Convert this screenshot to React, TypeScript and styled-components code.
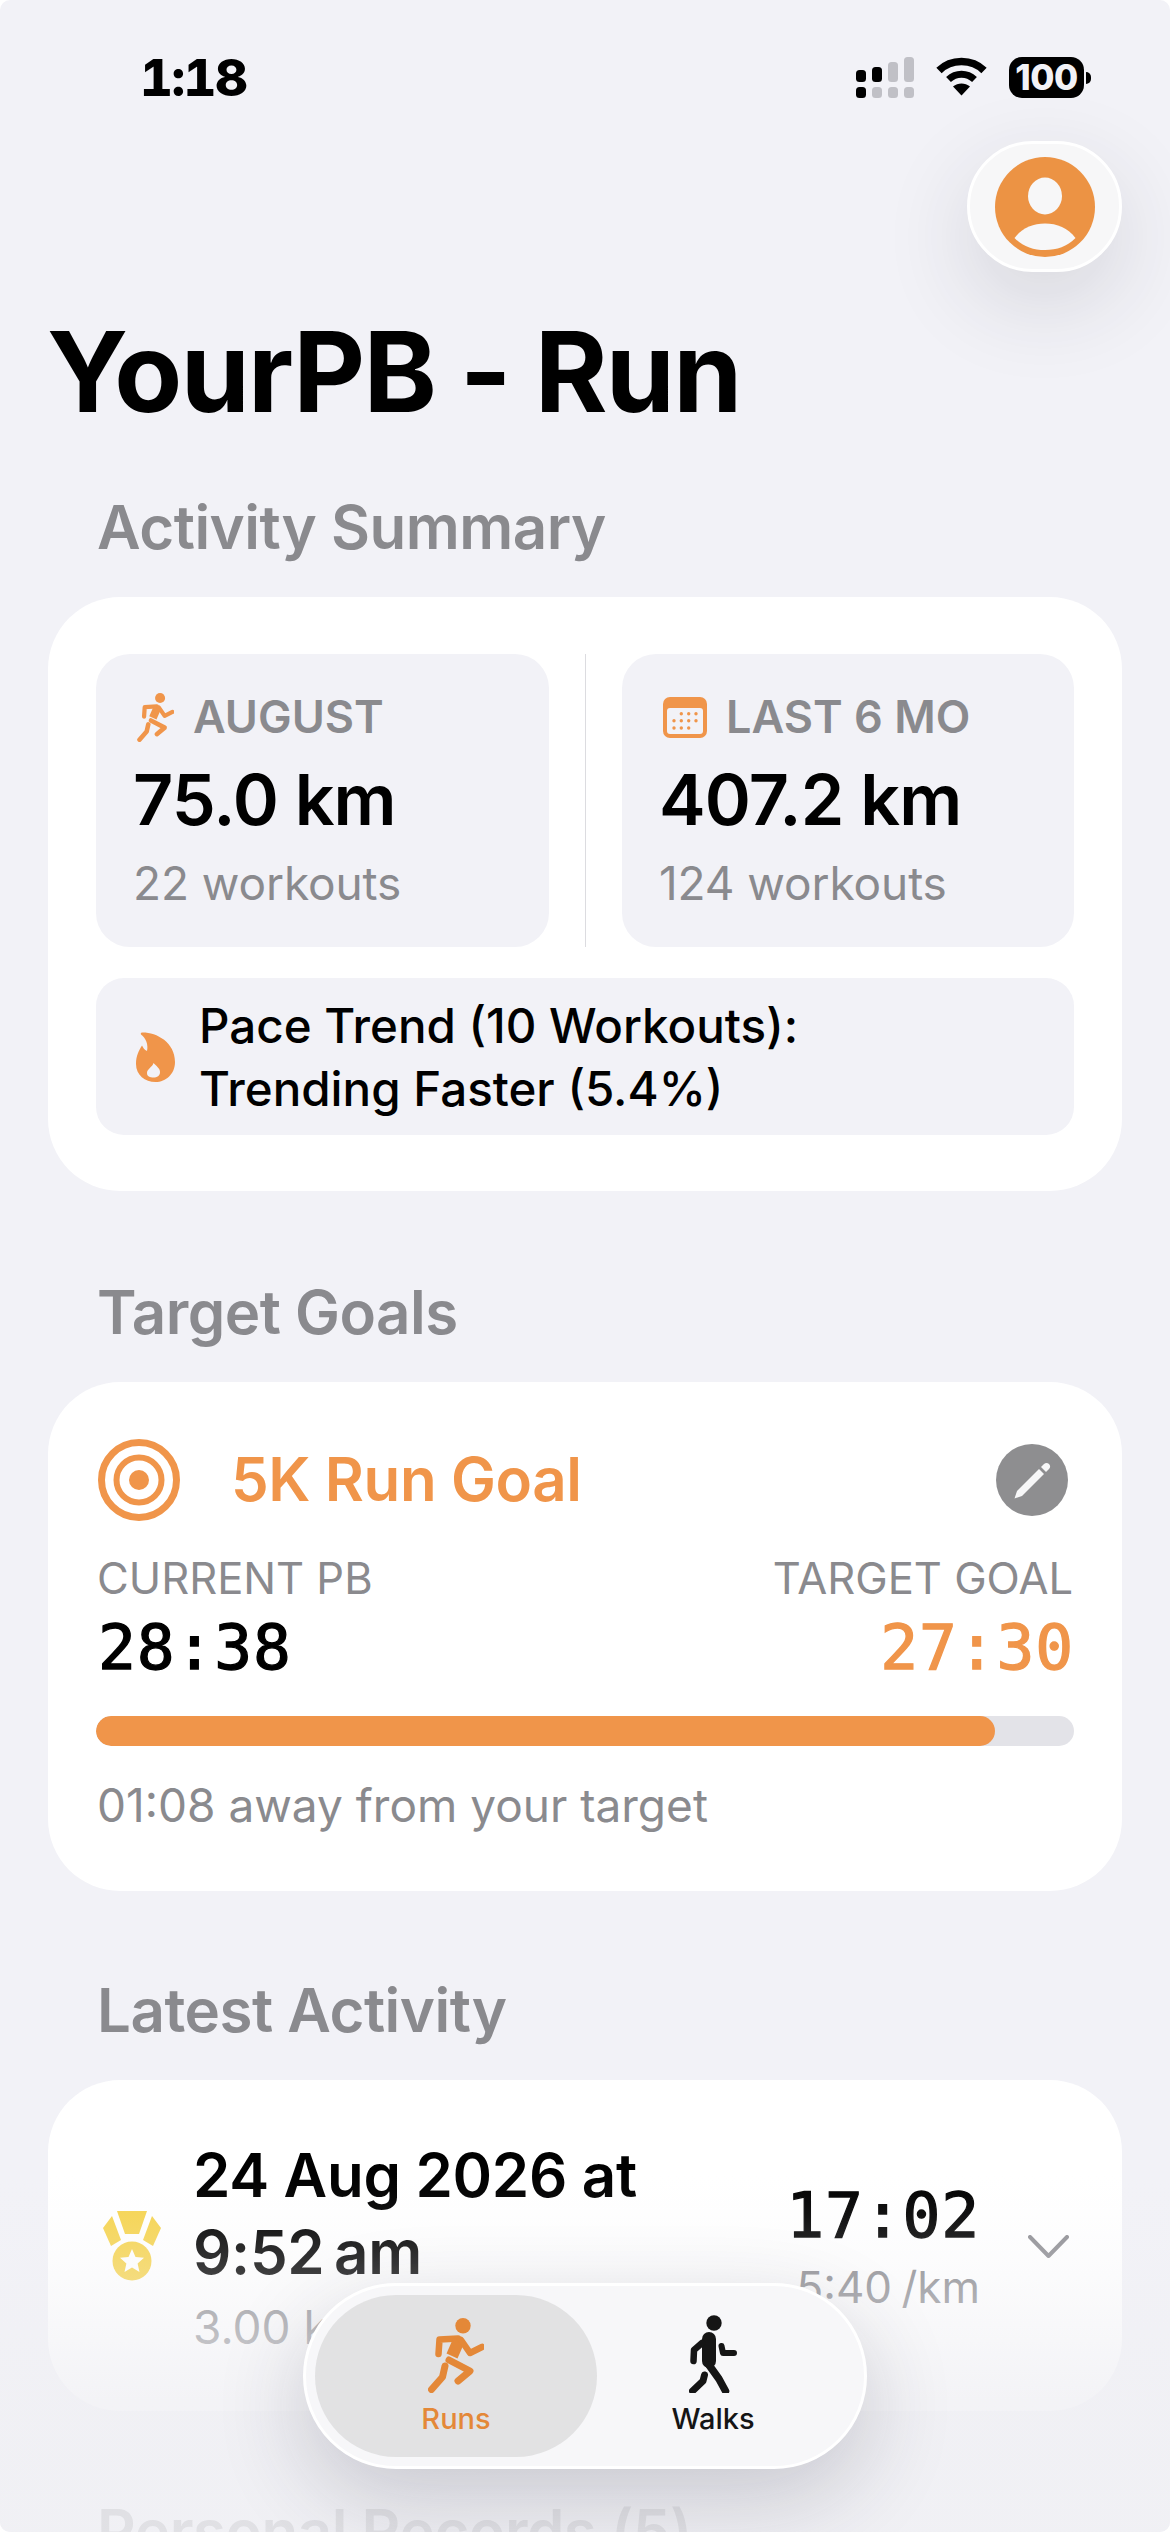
import React from "react";
import styled, { createGlobalStyle } from "styled-components";

const GlobalStyle = createGlobalStyle`
  html, body { margin: 0; padding: 0; background: #fff; }
  * { box-sizing: border-box; }
`;

const ORANGE = "#f0954a";
const GRAY = "#8a8a8e";

const Page = styled.div`
  position: relative;
  width: 1170px;
  height: 2532px;
  overflow: hidden;
  border-radius: 10px;
  background: #f2f2f7;
  font-family: Inter, "Liberation Sans", sans-serif;
  padding: 0 48px;
`;

const StatusBar = styled.div`
  height: 141px;
  margin: 0 -48px;
  padding: 57px 86px 0 140px;
  display: flex;
  align-items: flex-start;
  justify-content: space-between;
`;
const Clock = styled.div`
  font-size: 51px;
  line-height: 41px;
  font-weight: 800;
  color: #000;
  font-variant-numeric: tabular-nums;
  letter-spacing: -1.5px;
`;
const StatusIcons = styled.div`
  display: flex;
  align-items: flex-start;
  gap: 22px;
`;
const Battery = styled.div`
  position: relative;
  width: 75px;
  height: 41px;
  border-radius: 13px;
  background: #000;
  color: #f2f2f7;
  font-size: 35px;
  font-weight: 800;
  line-height: 41px;
  text-align: center;
  letter-spacing: -0.5px;
  &::after {
    content: "";
    position: absolute;
    left: 77px;
    top: 15px;
    width: 5px;
    height: 12px;
    border-radius: 0 6px 6px 0;
    background: #000;
  }
`;

const ProfileRow = styled.div`
  display: flex;
  justify-content: flex-end;
`;
const ProfileButton = styled.div`
  width: 155px;
  height: 131px;
  border-radius: 66px;
  background: #f7f7f8;
  border: 3px solid #fff;
  display: flex;
  align-items: center;
  justify-content: center;
  box-shadow: 0 30px 90px rgba(40, 40, 60, 0.14);
`;

const Title = styled.h1`
  margin: 40px 0 0 -1px;
  font-size: 111px;
  line-height: 120px;
  font-weight: 700;
  color: #000;
  letter-spacing: -1.7px;
`;

const SectionHeading = styled.h2<{ $top: number }>`
  margin: ${(p) => p.$top}px 0 35px 49px;
  font-size: 60px;
  line-height: 70px;
  font-weight: 600;
  color: ${GRAY};
  letter-spacing: -0.5px;
`;

const Card = styled.section`
  background: #fff;
  border-radius: 72px;
  padding: 57px 48px 56px;
`;

const StatGrid = styled.div`
  display: grid;
  grid-template-columns: 453px 1px 452px;
  gap: 36px;
`;
const Divider = styled.div`
  background: #dcdce0;
`;
const StatTile = styled.div`
  height: 293px;
  background: #f2f2f7;
  border-radius: 34px;
  padding: 37px 0 0 37px;
`;
const StatLabelRow = styled.div`
  display: flex;
  align-items: center;
  gap: 19px;
  height: 52px;
  margin-left: 4px;
`;
const StatLabel = styled.div`
  font-size: 45px;
  line-height: 52px;
  font-weight: 600;
  color: ${GRAY};
`;
const StatValue = styled.div`
  margin-top: 15px;
  font-size: 70px;
  line-height: 84px;
  font-weight: 600;
  color: #000;
  letter-spacing: -0.9px;
`;
const Muted = styled.div`
  font-size: 46px;
  line-height: 56px;
  color: ${GRAY};
`;
const StatSub = styled(Muted)`
  margin-top: 13px;
  letter-spacing: -0.1px;
`;
const TrendBox = styled.div`
  margin-top: 31px;
  height: 157px;
  border-radius: 28px;
  background: #f2f2f7;
  padding-left: 40px;
  display: flex;
  align-items: center;
  gap: 24px;
`;
const TrendText = styled.div`
  font-size: 47.5px;
  line-height: 63px;
  font-weight: 500;
  color: #000;
`;

const GoalHeader = styled.div`
  display: flex;
  align-items: center;
  gap: 51px;
  height: 82px;
  padding: 0 6px 0 2px;
`;
const GoalTitle = styled.div`
  flex: 1;
  font-size: 60px;
  line-height: 70px;
  font-weight: 600;
  color: ${ORANGE};
  letter-spacing: -0.4px;
  margin-bottom: 2px;
`;
const EditButton = styled.div`
  width: 72px;
  height: 72px;
  border-radius: 50%;
  background: #8e8e90;
  display: flex;
  align-items: center;
  justify-content: center;
`;
const LabelRow = styled.div`
  margin-top: 32px;
  display: flex;
  justify-content: space-between;
  padding: 0 1px;
  font-size: 43.5px;
  line-height: 50px;
  color: ${GRAY};
`;
const ValueRow = styled.div`
  margin-top: 10px;
  display: flex;
  justify-content: space-between;
  padding: 0 0 0 2px;
`;
const Mono = styled.div<{ $accent?: boolean }>`
  font-family: "DejaVu Sans Mono", "Liberation Mono", monospace;
  font-size: 63px;
  line-height: 70px;
  font-weight: 400;
  letter-spacing: 0.8px;
  color: ${(p) => (p.$accent ? ORANGE : "#000")};
  -webkit-text-stroke: 1.3px currentColor;
`;
const ProgressTrack = styled.div`
  margin-top: 33px;
  height: 30px;
  border-radius: 15px;
  background: #e3e3e8;
  overflow: hidden;
`;
const ProgressFill = styled.div`
  height: 100%;
  border-radius: 15px;
  background: ${ORANGE};
`;
const GoalNote = styled(Muted)`
  margin: 31px 0 2px 1px;
`;

const ActivityRow = styled.div`
  display: flex;
  align-items: center;
  padding: 0 5px 0 7px;
`;
const ActivityMain = styled.div`
  margin-left: 32px;
  width: 500px;
  flex: none;
`;
const ActivityDate = styled.div`
  font-size: 60px;
  line-height: 77px;
  font-weight: 600;
  color: #000;
  letter-spacing: -0.3px;
`;
const ActivitySub = styled(Muted)`
  margin-top: 8px;
`;
const ActivityStats = styled.div`
  margin-left: auto;
  padding-top: 3px;
  display: flex;
  flex-direction: column;
  align-items: flex-end;
`;
const ActivityPace = styled(Muted)`
  margin-top: 8px;
  font-size: 44px;
  word-spacing: -3px;
`;
const Chevron = styled.svg`
  margin-left: 48px;
  flex: none;
`;

const Fade = styled.div`
  position: absolute;
  left: 0;
  right: 0;
  top: 2175px;
  bottom: 0;
  pointer-events: none;
  background: linear-gradient(
    to bottom,
    rgba(240, 240, 244, 0) 0%,
    rgba(240, 240, 244, 0.07) 11%,
    rgba(240, 240, 244, 0.21) 24%,
    rgba(240, 240, 244, 0.3) 31%,
    rgba(240, 240, 244, 0.47) 42%,
    rgba(240, 240, 244, 0.8) 63%,
    rgba(240, 240, 244, 0.85) 100%
  );
`;

const BottomNav = styled.nav`
  position: absolute;
  left: 303px;
  top: 2283px;
  width: 564px;
  height: 186px;
  border-radius: 93px;
  border: 3px solid #fff;
  background: #f7f7f9;
  padding: 9px;
  display: flex;
  box-shadow: 0 30px 90px rgba(40, 40, 60, 0.2);
`;
const NavTab = styled.div<{ $active?: boolean }>`
  width: ${(p) => (p.$active ? 282 : 232)}px;
  height: 162px;
  border-radius: 81px;
  background: ${(p) => (p.$active ? "#e2e2e3" : "transparent")};
  color: ${(p) => (p.$active ? "#e48838" : "#151515")};
  display: flex;
  flex-direction: column;
  align-items: center;
  padding-top: ${(p) => (p.$active ? 23 : 20)}px;
`;
const NavLabel = styled.div<{ $top: number }>`
  margin-top: ${(p) => p.$top}px;
  font-size: 29px;
  line-height: 34px;
  font-weight: 500;
`;

const RunIcon = ({ w, h }: { w: number; h: number }) => (
  <svg width={w} height={h} viewBox="0 0 56 75" fill="none" stroke="currentColor" strokeLinecap="round" strokeLinejoin="round">
    <circle cx="35" cy="7.7" r="7.7" fill="currentColor" stroke="none" />
    <path d="M10.5 36 L11.5 21.5 L30 20.5" strokeWidth="6.5" />
    <path d="M31 22 L24 38" strokeWidth="12" strokeLinecap="butt" />
    <path d="M33 22 L42 35 L54 29" strokeWidth="6.5" />
    <path d="M21 42 L42 53 L30 63" strokeWidth="7" />
    <path d="M17 48 L14.5 59 L3.5 71.5" strokeWidth="7" strokeLinecap="round" />
  </svg>
);

const WalkIcon = () => (
  <svg width="49" height="78" viewBox="0 0 49 78" fill="none" stroke="currentColor" strokeLinecap="round" strokeLinejoin="round">
    <circle cx="25" cy="8" r="7.7" fill="currentColor" stroke="none" />
    <path d="M20 24 L20 46" strokeWidth="14" strokeLinecap="round" />
    <path d="M13 28 L5 35 L4.5 46" strokeWidth="6.5" />
    <path d="M32.5 31 L34 38 L45 38" strokeWidth="6" />
    <path d="M20 50 L30 64 L36.5 76" strokeWidth="7.5" />
    <path d="M15.5 60 L14 66 L3.5 76" strokeWidth="7" />
  </svg>
);

const SignalIcon = () => (
  <svg width="58" height="41" viewBox="0 0 58 41">
    <rect x="0" y="13" width="10" height="12" rx="3.5" fill="#000" />
    <rect x="16" y="10" width="10" height="15" rx="3.5" fill="#000" />
    <rect x="32" y="5" width="10" height="20" rx="3.5" fill="#c0c0c6" />
    <rect x="48" y="0" width="10" height="25" rx="3.5" fill="#c0c0c6" />
    <rect x="0" y="30" width="10" height="11" rx="3.5" fill="#000" />
    <rect x="16" y="30" width="10" height="11" rx="3.5" fill="#c0c0c6" />
    <rect x="32" y="30" width="10" height="11" rx="3.5" fill="#c0c0c6" />
    <rect x="48" y="30" width="10" height="11" rx="3.5" fill="#c0c0c6" />
  </svg>
);

const WifiIcon = () => (
  <svg width="51" height="39" viewBox="0 0 51 39" fill="none" stroke="#000">
    <path d="M3 13.5 C15 1.5 36 1.5 48 13.5" strokeWidth="7.5" />
    <path d="M12.5 22.5 C20 15.5 31 15.5 38.5 22.5" strokeWidth="7" />
    <path d="M25.5 38.5 L17 29.5 C22 25.5 29 25.5 34 29.5 Z" fill="#000" stroke="none" />
  </svg>
);

const ProfileIcon = () => (
  <svg width="100" height="100" viewBox="0 0 100 100">
    <circle cx="50" cy="50" r="50" fill="#ec9344" />
    <ellipse cx="50" cy="39" rx="17" ry="18.5" fill="#f7f7f8" />
    <path d="M19.5 81 C27 71 38 66.5 50 66.5 C62 66.5 73 71 80.5 81 C72 89.5 62 93 50 93 C38 93 28 89.5 19.5 81 Z" fill="#f7f7f8" />
  </svg>
);

const CalendarIcon = () => (
  <svg width="44" height="41" viewBox="0 0 44 41">
    <rect width="44" height="41" rx="7" fill={ORANGE} />
    <rect x="4" y="11" width="36" height="26" rx="3" fill="#f2f2f7" />
    {[
      [18.3, 16.7], [25.7, 16.7], [33, 16.7],
      [11, 23.7], [18.3, 23.7], [25.7, 23.7], [33, 23.7],
      [11, 31], [18.3, 31], [25.7, 31],
    ].map(([cx, cy]) => (
      <circle key={`${cx}-${cy}`} cx={cx} cy={cy} r="1.7" fill={ORANGE} />
    ))}
  </svg>
);

const FlameIcon = () => (
  <svg width="39" height="50" viewBox="0 0 39 50" style={{ flex: "none" }}>
    <path
      fillRule="evenodd"
      fill={ORANGE}
      d="M6 .6 C20 .2 39 10 39 30 C39 42 30 50 19.5 50 C9 50 0 43 0 32 C0 24 3 18 6 13.5 C7 15.5 8.5 18 11 19 C12.5 13 10 6 5 2.5 C4.5 1.5 5 .7 6 .6 Z M17.5 31 C16.5 35 11 37 11 41 C11 44.5 14 45.5 17.5 45.5 C21 45.5 24 44 24 40 C24 36 20 34 17.5 31 Z"
    />
  </svg>
);

const TargetIcon = () => (
  <svg width="82" height="82" viewBox="0 0 82 82" fill="none" stroke={ORANGE} style={{ flex: "none" }}>
    <circle cx="41" cy="41" r="37.5" strokeWidth="7" />
    <circle cx="41" cy="41" r="22.5" strokeWidth="6" />
    <circle cx="41" cy="41" r="10" fill={ORANGE} stroke="none" />
  </svg>
);

const PencilIcon = () => (
  <svg width="37" height="37" viewBox="0 0 37 37">
    <path d="M.5 36.5 L3 29 L25 7 L30 12 L8 34 Z" fill="#f7f7f8" />
    <path d="M27 5 L30 2 C31.5 .5 33.5 .5 35 2 C36.5 3.500 36.5 5.500 35 7 L32 10 Z" fill="#f7f7f8" />
  </svg>
);

const MedalIcon = () => (
  <svg width="58" height="70" viewBox="0 0 58 70" style={{ flex: "none" }}>
    <path d="M14 0 L44 0 L36 23 L22 23 Z" fill="#f6d450" />
    <path d="M9 5 L0 17 L8 35 L18 29 Z" fill="#f6d450" />
    <path d="M49 5 L58 17 L50 35 L40 29 Z" fill="#f6d450" />
    <circle cx="29" cy="50" r="19.5" fill="#f6d450" />
    <path d="M29 38 L32.5 46 L41 46.8 L34.6 52.5 L36.5 61 L29 56.5 L21.5 61 L23.4 52.5 L17 46.8 L25.5 46 Z" fill="#fff" />
  </svg>
);

const StatIconBox = styled.span`
  display: flex;
  color: ${ORANGE};
`;

export default function App() {
  return (
    <Page>
      <GlobalStyle />
      <StatusBar>
        <Clock>1:18</Clock>
        <StatusIcons>
          <SignalIcon />
          <WifiIcon />
          <Battery>100</Battery>
        </StatusIcons>
      </StatusBar>
      <ProfileRow>
        <ProfileButton>
          <ProfileIcon />
        </ProfileButton>
      </ProfileRow>
      <Title>YourPB - Run</Title>

      <SectionHeading $top={60}>Activity Summary</SectionHeading>
      <Card>
        <StatGrid>
          <StatTile>
            <StatLabelRow>
              <StatIconBox>
                <RunIcon w={37} h={49} />
              </StatIconBox>
              <StatLabel>AUGUST</StatLabel>
            </StatLabelRow>
            <StatValue>75.0 km</StatValue>
            <StatSub>22 workouts</StatSub>
          </StatTile>
          <Divider />
          <StatTile>
            <StatLabelRow>
              <CalendarIcon />
              <StatLabel>LAST 6 MO</StatLabel>
            </StatLabelRow>
            <StatValue>407.2 km</StatValue>
            <StatSub>124 workouts</StatSub>
          </StatTile>
        </StatGrid>
        <TrendBox>
          <FlameIcon />
          <TrendText>
            Pace Trend (10 Workouts):
            <br />
            Trending Faster (5.4%)
          </TrendText>
        </TrendBox>
      </Card>

      <SectionHeading $top={86}>Target Goals</SectionHeading>
      <Card>
        <GoalHeader>
          <TargetIcon />
          <GoalTitle>5K Run Goal</GoalTitle>
          <EditButton>
            <PencilIcon />
          </EditButton>
        </GoalHeader>
        <LabelRow>
          <span>CURRENT PB</span>
          <span>TARGET GOAL</span>
        </LabelRow>
        <ValueRow>
          <Mono>28:38</Mono>
          <Mono $accent>27:30</Mono>
        </ValueRow>
        <ProgressTrack>
          <ProgressFill style={{ width: `${(899 / 978) * 100}%` }} />
        </ProgressTrack>
        <GoalNote>01:08 away from your target</GoalNote>
      </Card>

      <SectionHeading $top={84}>Latest Activity</SectionHeading>
      <Card>
        <ActivityRow>
          <MedalIcon />
          <ActivityMain>
            <ActivityDate>24 Aug 2026 at 9:52{"\u202f"}am</ActivityDate>
            <ActivitySub>3.00 km</ActivitySub>
          </ActivityMain>
          <ActivityStats>
            <Mono>17:02</Mono>
            <ActivityPace>5:40 /km</ActivityPace>
          </ActivityStats>
          <Chevron width="41" height="23" viewBox="0 0 41 23" fill="none" stroke="#8e8e93" strokeWidth="4" strokeLinecap="round" strokeLinejoin="round">
            <path d="M2 2 L20.5 21 L39 2" />
          </Chevron>
        </ActivityRow>
      </Card>

      <SectionHeading $top={85}>Personal Records (5)</SectionHeading>

      <Fade />
      <BottomNav>
        <NavTab $active>
          <RunIcon w={56} h={75} />
          <NavLabel $top={9}>Runs</NavLabel>
        </NavTab>
        <NavTab>
          <WalkIcon />
          <NavLabel $top={9}>Walks</NavLabel>
        </NavTab>
      </BottomNav>
    </Page>
  );
}
